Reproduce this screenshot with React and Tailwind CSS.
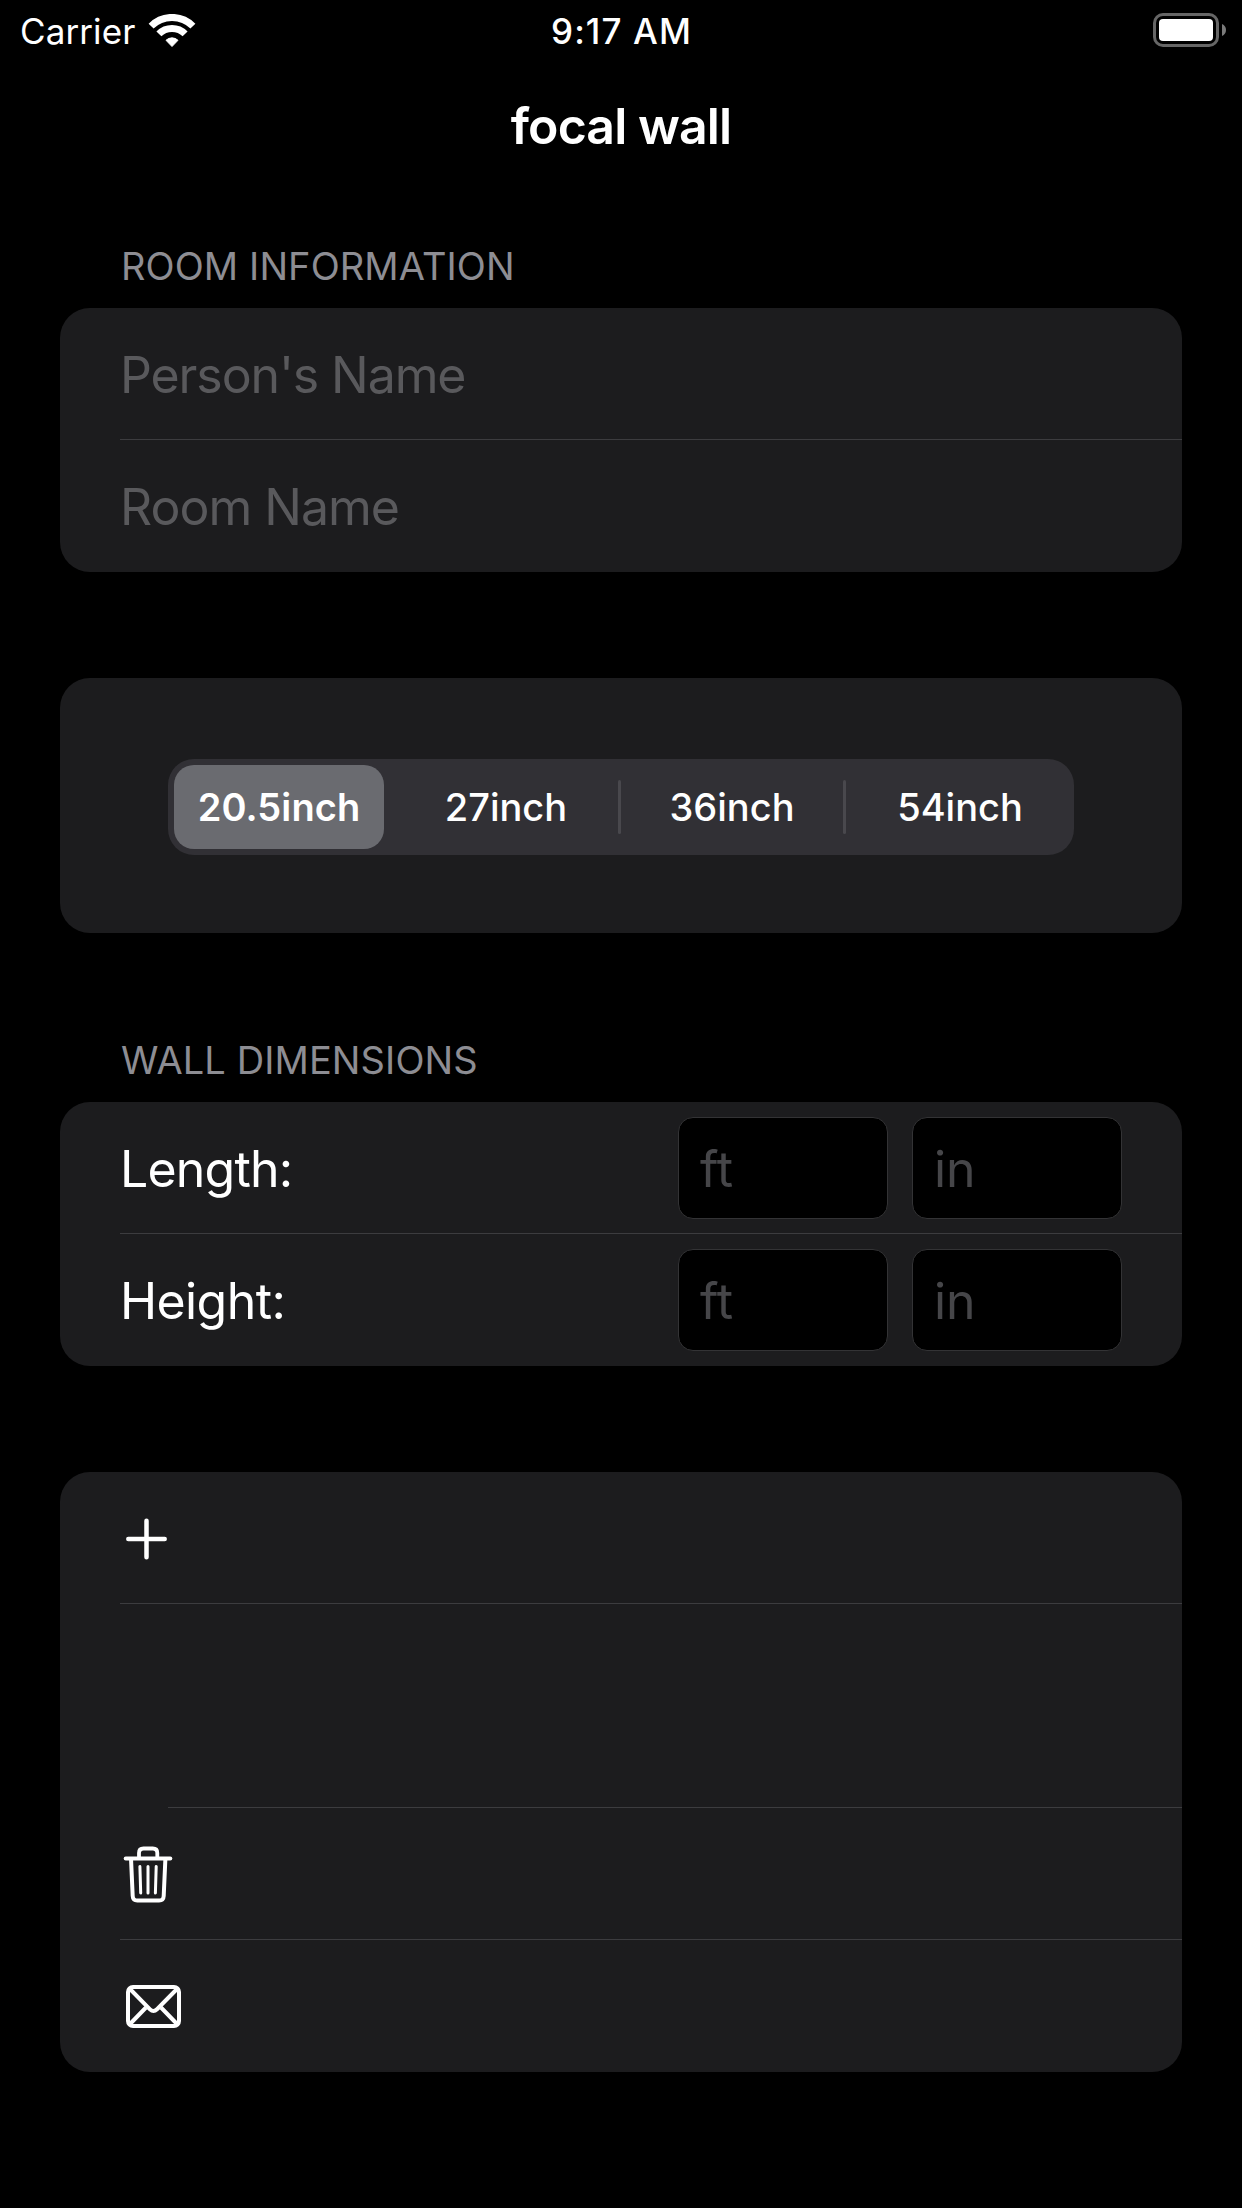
import { useState } from "react";

const SIZES = ["20.5inch", "27inch", "36inch", "54inch"];

const SEGMENT_STYLES = [
  "w-[210px] ml-1.5 h-[84px] rounded-[20px] bg-[#6a6b70] font-[560] tracking-[0.1px]",
  "w-[234px] pl-[10px] font-[460]",
  "w-[222px] font-[460]",
  "w-[228px] font-[460]",
];

function WifiIcon() {
  return (
    <svg className="w-12 h-[34px]" viewBox="0 0 48 34" fill="none">
      <path d="M3.1 12.1a29.5 29.5 0 0 1 41.8 0" stroke="#fff" strokeWidth="7" />
      <path d="M10.9 19.9a18.5 18.5 0 0 1 26.2 0" stroke="#fff" strokeWidth="7" />
      <path
        d="M24 32.5l-6-6.2a8.6 8.6 0 0 1 12 0z"
        fill="#fff"
        stroke="#fff"
        strokeWidth="1"
        strokeLinejoin="round"
      />
    </svg>
  );
}

function BatteryIcon() {
  return (
    <svg className="w-[74px] h-[34px]" viewBox="0 0 74 34" fill="none">
      <rect x="1.5" y="1.5" width="63" height="31" rx="8.5" stroke="#666" strokeWidth="3" />
      <rect x="6" y="6" width="54" height="22" rx="4" fill="#fff" />
      <path d="M69 11c2.6 1 4 3.4 4 6s-1.4 5-4 6z" fill="#7a7a7a" />
    </svg>
  );
}

function PlusIcon() {
  return (
    <svg className="w-[60px] h-[60px]" viewBox="0 0 60 60" fill="none">
      <path
        d="M26.5 12.8v36.4M8.3 31h36.4"
        stroke="#fff"
        strokeWidth="4.5"
        strokeLinecap="round"
      />
    </svg>
  );
}

function TrashIcon() {
  return (
    <svg className="w-[60px] h-[68px]" viewBox="0 -0.5 60 68" fill="none" stroke="#fff">
      <path d="M5.7 18h44.6" strokeWidth="4" strokeLinecap="round" />
      <path d="M19 18v-5.5q0-4.5 4.5-4.5h9.3q4.5 0 4.5 4.5V18" strokeWidth="3.8" />
      <path d="M11 18l1.7 37.5q.2 4.5 4.6 4.5h21.8q4.4 0 4.6-4.5L45.4 18" strokeWidth="4" />
      <path
        d="M19.9 26l.8 26.5M28 26v26.5M36.2 26l-.8 26.5"
        strokeWidth="3"
        strokeLinecap="round"
      />
    </svg>
  );
}

function MailIcon() {
  return (
    <svg className="w-[66px] h-[54px]" viewBox="0 -1 66 54" fill="none" stroke="#fff">
      <rect x="8" y="7" width="51" height="39" rx="5" strokeWidth="4" />
      <path d="M10 9l20 20.3q3.5 3.4 7 0L57 9" strokeWidth="4" />
      <path d="M10 44l16-16.500M57 44L41 27.500" strokeWidth="4" />
    </svg>
  );
}

function SectionTitle({ children }) {
  return (
    <h2 className="h-[84px] pl-[61px] flex items-center text-[38px] leading-none tracking-[0.1px] text-[#8d8d93]">
      {children}
    </h2>
  );
}

function Card({ children, className = "" }) {
  return (
    <section className={`bg-[#1c1c1e] rounded-[30px] overflow-hidden ${className}`}>
      {children}
    </section>
  );
}

function Row({ children, last, line = "ml-[60px]" }) {
  return (
    <div className="h-[132px] flex flex-col">
      <div className="flex-1 px-[60px] flex items-center justify-between">{children}</div>
      {!last && <div className={`h-px bg-[#3c3c3f] ${line}`} />}
    </div>
  );
}

function UnitInput({ unit }) {
  return (
    <input
      type="text"
      placeholder={unit}
      className="w-[210px] h-[102px] pt-0.5 pl-[21px] rounded-[15px] border border-[#333335] bg-black text-[50px] text-white placeholder:text-[#464649] outline-none"
    />
  );
}

export default function App() {
  const [name, setName] = useState("");
  const [room, setRoom] = useState("");

  return (
    <div className="w-[1242px] h-[2208px] bg-black text-white font-['Inter','Liberation_Sans',sans-serif] overflow-hidden">
      <header className="h-[60px] grid grid-cols-3 items-center pl-[20px] pr-[15px] text-[35px] leading-none">
        <div className="flex items-center gap-[13px] pt-0.5">
          <span className="tracking-[0.1px]">Carrier</span>
          <WifiIcon />
        </div>
        <span className="text-center pt-0.5 pr-[4px] font-medium tracking-[1.1px]">9:17 AM</span>
        <div className="flex justify-end">
          <BatteryIcon />
        </div>
      </header>

      <h1 className="h-[132px] flex items-center justify-center text-[50px] leading-none font-semibold tracking-[-0.9px]">
        focal wall
      </h1>

      <main className="px-[60px] pt-8">
        <SectionTitle>ROOM INFORMATION</SectionTitle>
        <Card>
          <Row>
            <input
              type="text"
              placeholder="Person's Name"
              value={name}
              onChange={(e) => setName(e.target.value)}
              className="w-full h-full pt-0.5 bg-transparent text-[50px] tracking-[-1.1px] placeholder:text-[#59595c] outline-none"
            />
          </Row>
          <Row last>
            <input
              type="text"
              placeholder="Room Name"
              value={room}
              onChange={(e) => setRoom(e.target.value)}
              className="w-full h-full pt-0.5 bg-transparent text-[50px] tracking-[-1px] placeholder:text-[#59595c] outline-none"
            />
          </Row>
        </Card>

        <Card className="mt-[106px] h-[255px] px-[108px] pt-[81px]">
          <div className="h-24 flex items-center rounded-[26px] bg-[#313035] text-[38px] leading-none">
            {SIZES.map((size, index) => (
              <div key={size} className="contents">
                {index > 1 && <div className="w-[3px] h-[54px] rounded-full bg-[#49484d]" />}
                <button className={`flex items-center justify-center ${SEGMENT_STYLES[index]}`}>
                  {size}
                </button>
              </div>
            ))}
          </div>
        </Card>

        <div className="mt-[85px]">
          <SectionTitle>WALL DIMENSIONS</SectionTitle>
        </div>
        <Card>
          <Row>
            <label className="pt-0.5 text-[50px] leading-none tracking-[-0.8px]">Length:</label>
            <div className="flex gap-6">
              <UnitInput unit="ft" />
              <UnitInput unit="in" />
            </div>
          </Row>
          <Row last>
            <label className="pt-0.5 text-[50px] leading-none tracking-[-0.6px]">Height:</label>
            <div className="flex gap-6">
              <UnitInput unit="ft" />
              <UnitInput unit="in" />
            </div>
          </Row>
        </Card>

        <Card className="mt-[106px]">
          <Row>
            <button>
              <PlusIcon />
            </button>
          </Row>
          <div className="h-[204px] flex flex-col justify-end">
            <div className="h-px ml-[108px] bg-[#3c3c3f]" />
          </div>
          <Row>
            <button>
              <TrashIcon />
            </button>
          </Row>
          <Row last>
            <button>
              <MailIcon />
            </button>
          </Row>
        </Card>
      </main>
    </div>
  );
}
